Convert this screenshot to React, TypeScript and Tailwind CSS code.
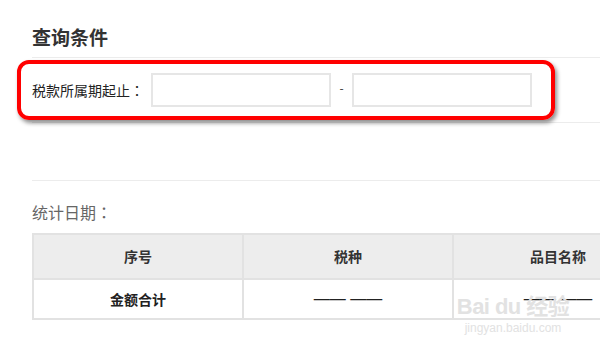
import React from 'react';

const columns = ['序号', '税种', '品目名称', '税款金额'];

const Colon: React.FC = () => (
  <span style={{ fontFamily: '"Noto Sans CJK TC", sans-serif' }}>：</span>
);

const dashCell = 'border-2 border-[#e2e2e2] text-center text-[16px] text-[#222]';

const App: React.FC = () => {
  return (
    <div
      className="relative w-[600px] h-[350px] overflow-hidden bg-white text-[#333]"
      style={{ fontFamily: '"Noto Sans CJK SC", "Liberation Sans", sans-serif' }}
    >
      <div className="pl-8 w-[900px]">
        {/* 查询条件 */}
        <h2 className="pt-[25px] h-[57px] text-[19px] leading-[24px] font-bold text-[#333]">
          查询条件
        </h2>
        <div className="h-[66px] border-y border-[#ececec] flex items-center">
          <span className="text-[14px] text-[#222] w-[119px]">
            税款所属期起止<Colon />
          </span>
          <input className="w-[180px] h-[34px] border-2 border-[#e6e6e6] outline-none" />
          <span className="w-[21px] text-center text-[12px] -mt-[5px]">-</span>
          <input className="w-[180px] h-[34px] border-2 border-[#e6e6e6] outline-none" />
        </div>

        <div className="h-[57px]" />
        <div className="border-t border-[#ececec]" />

        {/* 统计日期 */}
        <div className="pt-[21px] h-[52px] text-[16px] leading-[20px] text-[#666]">
          统计日期<Colon />
        </div>

        <table className="border-collapse text-[14px]">
          <thead>
            <tr className="bg-[#ededed]">
              {columns.map((c) => (
                <th key={c} className="w-[210px] h-[45px] border-2 border-[#e2e2e2] font-bold text-[#333]">
                  {c}
                </th>
              ))}
            </tr>
          </thead>
          <tbody>
            <tr>
              <td className="h-[40px] border-2 border-[#e2e2e2] text-center font-bold text-[#222]">金额合计</td>
              <td className={dashCell} style={{ fontFamily: '"Liberation Sans", sans-serif' }}>—— ——</td>
              <td className={dashCell} style={{ fontFamily: '"Liberation Sans", sans-serif' }}>—— ——</td>
              <td className={dashCell} style={{ fontFamily: '"Liberation Sans", sans-serif' }}>—— ——</td>
            </tr>
          </tbody>
        </table>
      </div>

      {/* annotation */}
      <div className="absolute left-[17px] top-[60px] w-[538px] h-[60px] border-4 border-[#ff0000] rounded-[12px] shadow-[2px_3px_4px_rgba(0,0,0,0.45)]" />

      {/* watermark */}
      <div
        className="absolute left-[460px] top-[293px] w-[106px] flex flex-col items-center text-[#e2e2e2] pointer-events-none"
        style={{ fontFamily: '"Liberation Sans", "Noto Sans CJK SC", sans-serif' }}
      >
        <div className="text-[22px] leading-[28px] font-bold tracking-tight whitespace-nowrap">Bai du 经验</div>
        <div className="text-[12px] leading-[14px] whitespace-nowrap">jingyan.baidu.com</div>
      </div>
    </div>
  );
};

export default App;
